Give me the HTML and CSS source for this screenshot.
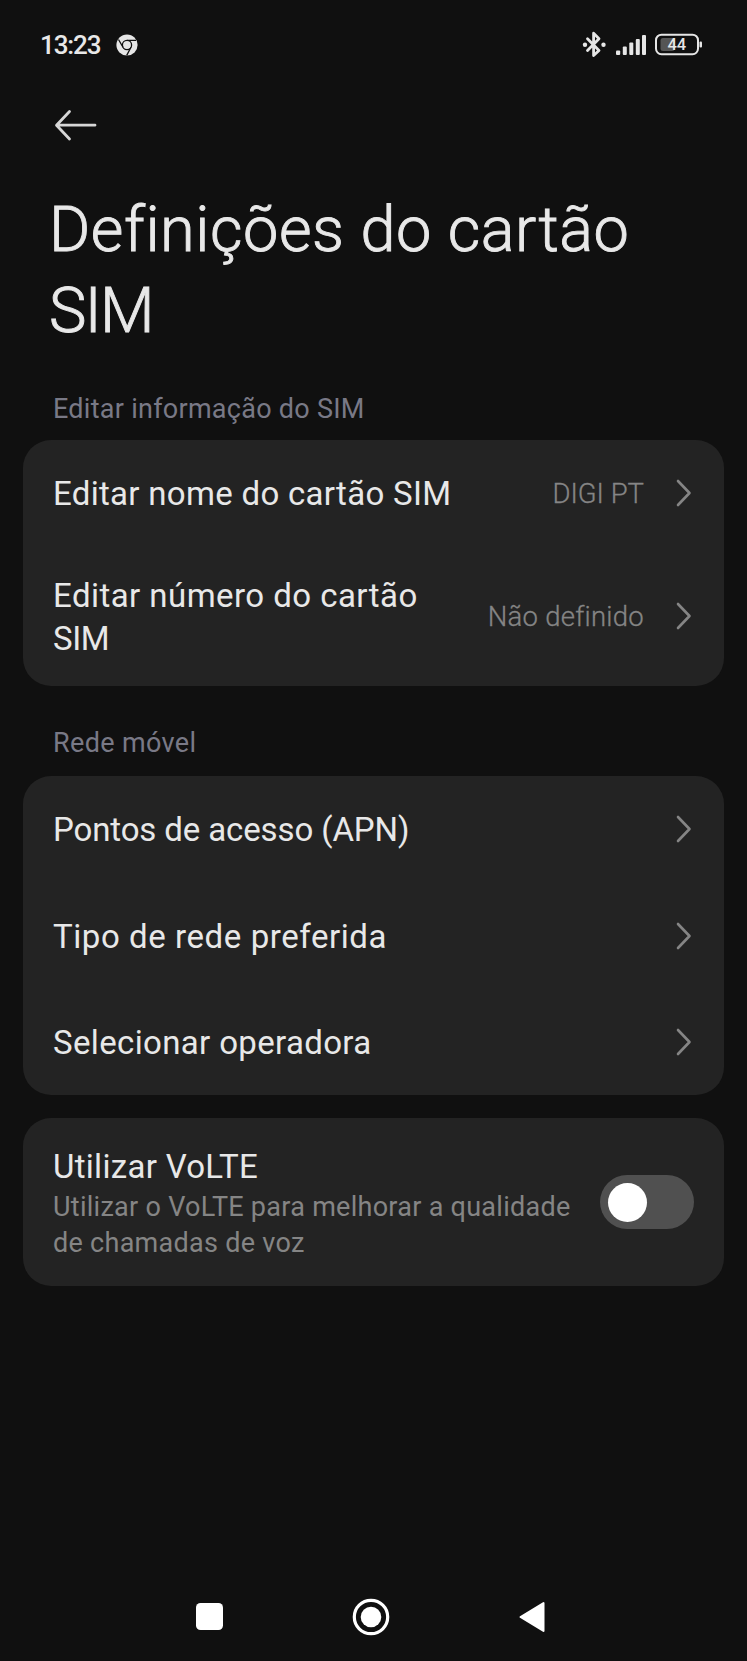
FILE: index.html
```html
<!DOCTYPE html>
<html lang="pt">
<head>
<meta charset="utf-8">
<title>Definições do cartão SIM</title>
<link rel="stylesheet" href="styles.css">
</head>
<body>
<div class="screen">
  <header class="status">
    <span class="time">13:23</span>
    <svg class="chrome" width="22" height="22" viewBox="0 0 22 22"><circle cx="11" cy="11" r="10.6" fill="#e6e6e6"/><g fill="none" stroke="#101010" stroke-width="1.3"><circle cx="11" cy="11" r="4.6"/><path d="M11 6.4H20M7 13.3L2.5 5.5M15 13.3L10.7 21.4"/></g></svg>
    <svg class="indicators" width="122" height="30" viewBox="0 0 122 30">
      <path d="M7.500 8.800L19 20.500L13.600 25.600V3.200L19 8.800L7.500 20.500" fill="none" stroke="#e6e6e6" stroke-width="2.800" stroke-linejoin="round" stroke-linecap="round"/>
      <circle cx="5" cy="14.700" r="2.200" fill="#e6e6e6"/><circle cx="23.500" cy="14.700" r="2.200" fill="#e6e6e6"/>
      <g fill="#e6e6e6"><rect x="36" y="20.500" width="4.200" height="4.500" rx="1"/><rect x="42.800" y="16.500" width="4" height="8.500" rx="1"/><rect x="49.300" y="12.500" width="4" height="12.500" rx="1"/><rect x="55.800" y="9" width="4" height="16" rx="1"/><rect x="62" y="5" width="4" height="20" rx="1"/></g>
      <rect x="80.500" y="8" width="14" height="13" rx="2.500" fill="#555"/>
      <rect x="76" y="4.700" width="42" height="19.500" rx="5.500" fill="none" stroke="#e6e6e6" stroke-width="2"/>
      <rect x="119.500" y="11.500" width="2.500" height="6" rx="1" fill="#e6e6e6"/>
      <text class="level" x="96.800" y="20.300" text-anchor="middle">44</text>
    </svg>
  </header>
  <nav class="topbar">
    <svg width="44" height="32" viewBox="0 0 44 32"><path d="M41 16.200H3M15.500 2.500L2.500 16.200L15.500 30" fill="none" stroke="#d6d6d6" stroke-width="2.800" stroke-linecap="round" stroke-linejoin="round"/></svg>
  </nav>
  <h1 class="title">Definições do cartão<br><span class="title-end">SIM</span></h1>

  <h2 class="label label-info">Editar informação do SIM</h2>
  <section class="card">
    <div class="row"><span class="name name-a">Editar nome do cartão SIM</span><span class="value digi">DIGI PT</span><svg class="chev" width="16" height="28" viewBox="0 0 16 28"><path d="M2 2L13.500 14L2 26"/></svg></div>
    <div class="row tall"><span class="name name-b">Editar número do cartão<br><span class="sim">SIM</span></span><span class="value nao">Não definido</span><svg class="chev" width="16" height="28" viewBox="0 0 16 28"><path d="M2 2L13.500 14L2 26"/></svg></div>
  </section>

  <h2 class="label label-net">Rede móvel</h2>
  <section class="card">
    <div class="row"><span class="name name-c">Pontos de acesso (APN)</span><svg class="chev" width="16" height="28" viewBox="0 0 16 28"><path d="M2 2L13.500 14L2 26"/></svg></div>
    <div class="row"><span class="name name-d">Tipo de rede preferida</span><svg class="chev" width="16" height="28" viewBox="0 0 16 28"><path d="M2 2L13.500 14L2 26"/></svg></div>
    <div class="row"><span class="name name-e">Selecionar operadora</span><svg class="chev" width="16" height="28" viewBox="0 0 16 28"><path d="M2 2L13.500 14L2 26"/></svg></div>
  </section>

  <section class="card volte">
    <div class="copy">
      <div class="name name-f">Utilizar VoLTE</div>
      <p class="hint">Utilizar o VoLTE para melhorar a qualidade<br>de chamadas de voz</p>
    </div>
    <div class="toggle"><div class="knob"></div></div>
  </section>

  <footer class="navbar">
    <svg width="27" height="27" viewBox="0 0 27 27"><rect width="27" height="27" rx="4.500" fill="#fff"/></svg>
    <svg width="38" height="38" viewBox="0 0 38 38"><circle cx="19" cy="19" r="16.700" fill="none" stroke="#fff" stroke-width="3.200"/><circle cx="19" cy="19" r="10.300" fill="#fff"/></svg>
    <svg width="26" height="32" viewBox="0 0 26 32"><path d="M24.500 2V30L1.500 16Z" fill="#fff" stroke="#fff" stroke-width="2" stroke-linejoin="round"/></svg>
  </footer>
</div>
</body>
</html>
```
FILE: styles.css
```css
* { box-sizing: border-box; margin: 0; padding: 0; }
body { background: #101010; font-family: Roboto, "Noto Sans", sans-serif; color: #e8e8e8; }
svg { display: block; flex: none; }
.screen { width: 747px; height: 1661px; display: flex; flex-direction: column; overflow: hidden; }

.status { height: 90px; padding: 0 45px 0 40px; display: flex; align-items: center; }
.time { font-size: 26px; font-weight: 500; width: 76px; letter-spacing: -1.1px; }
.indicators { margin-left: auto; }
.level { font: 500 16.500px Roboto, sans-serif; fill: #e6e6e6; }

.topbar { height: 70px; padding: 19px 0 0 54px; }
.title { height: 230px; padding: 29px 0 0 49px; font-size: 63px; font-weight: 300; line-height: 81px; white-space: nowrap; letter-spacing: 0.550px; -webkit-text-stroke: 0.900px #e8e8e8; }
.title-end { letter-spacing: -1.600px; }

.label { height: 50px; padding-left: 53px; font-size: 27px; font-weight: 400; line-height: 36px; color: #797986; }
.label-info { padding-top: 1px; letter-spacing: 0.270px; }
.label-net { height: 90px; padding-top: 39.500px; letter-spacing: 0.350px; }

.card { width: 701px; margin-left: 23px; background: #232323; border-radius: 28px; flex: none; }
.row { height: 106.400px; padding: 0 32px 0 30px; display: flex; align-items: center; }
.tall { height: 139.600px; }
.name { font-size: 33px; line-height: 42.700px; white-space: nowrap; padding-top: 3px; }
.name-a { letter-spacing: 0.300px; }
.name-b { letter-spacing: 0.450px; }
.sim { letter-spacing: -0.400px; }
.name-c { letter-spacing: -0.120px; }
.name-d { letter-spacing: 0.570px; }
.name-e { letter-spacing: 0.350px; }
.name-f { letter-spacing: 0.300px; }
.value { margin-left: auto; font-size: 27.500px; font-weight: 300; color: #858585; white-space: nowrap; -webkit-text-stroke: 0.300px #858585; }
.nao { letter-spacing: 0.250px; }
.chev { margin-left: auto; fill: none; stroke: #858585; stroke-width: 2.600; stroke-linecap: round; stroke-linejoin: round; }
.value + .chev { margin-left: 32px; }

.volte { height: 168px; margin-top: 23px; padding: 0 30px; display: flex; align-items: center; justify-content: space-between; }
.hint { font-size: 27px; line-height: 36px; color: #858585; white-space: nowrap; letter-spacing: 0.280px; }
.toggle { width: 94px; height: 54px; border-radius: 27px; background: #505050; padding: 7.500px; flex: none; }
.knob { width: 39px; height: 39px; border-radius: 50%; background: #fff; }

.navbar { margin-top: auto; height: 89px; padding: 0 202px 0 196px; display: flex; align-items: center; justify-content: space-between; }
```
